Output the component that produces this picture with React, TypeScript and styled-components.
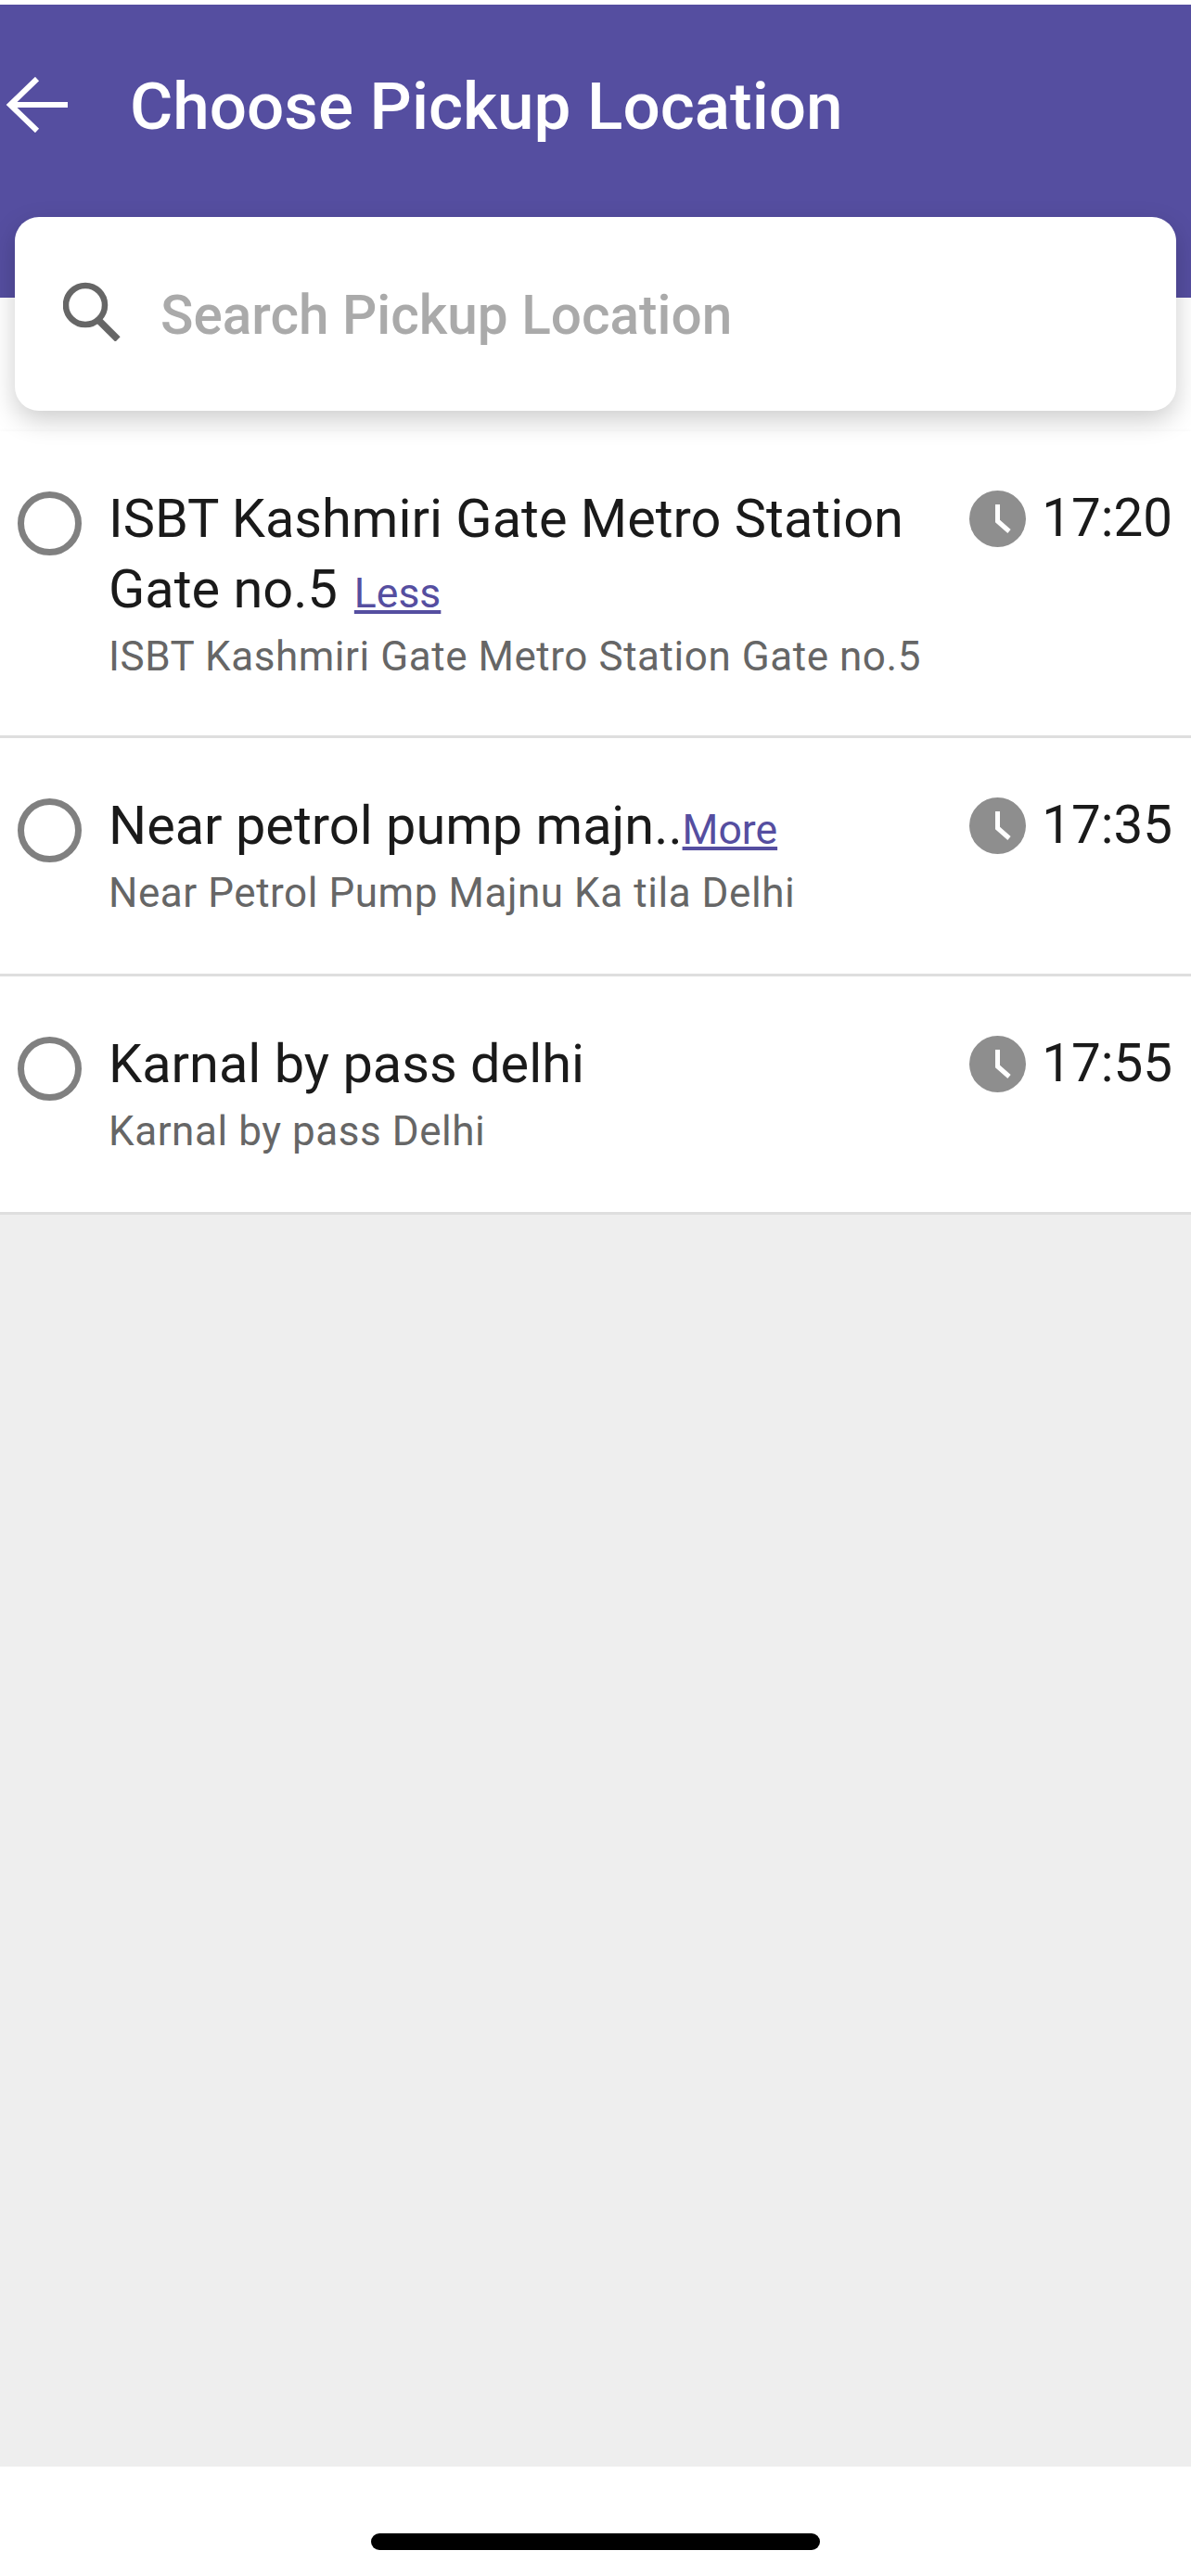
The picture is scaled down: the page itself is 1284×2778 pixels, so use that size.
import React from 'react';
import styled, { createGlobalStyle } from 'styled-components';

const GlobalStyle = createGlobalStyle`
    html, body {
        margin: 0;
        padding: 0;
        background: #fff;
    }
    * {
        box-sizing: border-box;
    }
`;

const Page = styled.div`
    width: 1284px;
    height: 2778px;
    padding-top: 5px;
    display: flex;
    flex-direction: column;
    background: #fff;
    font-family: Roboto, "Liberation Sans", sans-serif;
    overflow: hidden;
`;

const Header = styled.header`
    height: 316px;
    padding: 74px 0 0 6px;
    display: flex;
    align-items: flex-start;
    flex-shrink: 0;
    background: #554ea0;
`;

const BackIcon = styled.svg`
    width: 68px;
    height: 60px;
    margin-top: 4px;
`;

const Title = styled.h1`
    margin: 0 0 0 66px;
    font-size: 71px;
    line-height: 71px;
    font-weight: 500;
    color: #fff;
`;

const SearchCard = styled.div`
    position: relative;
    height: 209px;
    margin: -87px 16px 0;
    padding-left: 52px;
    display: flex;
    align-items: center;
    flex-shrink: 0;
    background: #fff;
    border-radius: 26px;
    box-shadow: 0 10px 28px rgba(0, 0, 0, 0.2);
`;

const SearchIcon = styled.svg`
    width: 63px;
    height: 64px;
    margin-bottom: 6px;
    flex-shrink: 0;
`;

const Placeholder = styled.span`
    margin-left: 42px;
    padding-top: 3px;
    font-size: 58.5px;
    font-weight: 500;
    color: #aaa;
`;

const List = styled.ul`
    margin: 22px 0 0;
    padding: 0;
    list-style: none;
    flex-shrink: 0;
    background: #fff;
    box-shadow: 0 3px 6px rgba(0, 0, 0, 0.14);
`;

const Row = styled.li<{ $expanded?: boolean }>`
    padding: 56px 20px ${p => (p.$expanded ? '50px' : '52px')} 19px;
    display: flex;
    align-items: flex-start;
    border-bottom: 3px solid #dedede;
`;

const Radio = styled.span`
    width: 69px;
    height: 69px;
    margin-top: 9px;
    flex-shrink: 0;
    border: 7px solid #808080;
    border-radius: 50%;
`;

const Content = styled.div`
    flex: 1;
    min-width: 0;
    margin-left: 29px;
`;

const Name = styled.div`
    font-size: 57.7px;
    line-height: 76px;
    color: #1a1a1a;
`;

const Toggle = styled.a<{ $spaced?: boolean }>`
    margin-left: ${p => (p.$spaced ? '18px' : '0')};
    font-size: 44.5px;
    line-height: 1;
    color: #554ea0;
    text-decoration: underline;
`;

const Address = styled.div`
    font-size: 44px;
    line-height: 70px;
    letter-spacing: 0.55px;
    color: #666;
`;

const TimeBox = styled.div`
    height: 76px;
    margin-left: 20px;
    display: flex;
    align-items: center;
    flex-shrink: 0;
`;

const ClockIcon = styled.svg`
    width: 61px;
    height: 61px;
`;

const Time = styled.span`
    margin-left: 17px;
    font-size: 56.5px;
    color: #1a1a1a;
`;

const Empty = styled.div`
    flex: 1;
    background: #eee;
`;

const HomeArea = styled.footer`
    height: 118px;
    padding-top: 72px;
    display: flex;
    justify-content: center;
    flex-shrink: 0;
    background: #fff;
`;

const HomeBar = styled.div`
    width: 484px;
    height: 18px;
    border-radius: 9px;
    background: #000;
`;

const stops = [
    {
        name: 'ISBT Kashmiri Gate Metro Station Gate no.5',
        toggle: 'Less',
        expanded: true,
        address: 'ISBT Kashmiri Gate Metro Station Gate no.5',
        time: '17:20',
    },
    {
        name: 'Near petrol pump majn..',
        toggle: 'More',
        address: 'Near Petrol Pump Majnu Ka tila Delhi',
        time: '17:35',
    },
    {
        name: 'Karnal by pass delhi',
        address: 'Karnal by pass Delhi',
        time: '17:55',
    },
];

const Clock = () => (
    <ClockIcon viewBox="0 0 61 61">
        <circle cx="30.5" cy="30.5" r="30.5" fill="#8e8e8e" />
        <path d="M30.5 15V33L43 44" fill="none" stroke="#fff" strokeWidth="5" />
    </ClockIcon>
);

export default function App() {
    return (
        <Page>
            <GlobalStyle />
            <Header>
                <BackIcon viewBox="0 0 68 60">
                    <path d="M67 30H6M34 2L5 30L34 58" fill="none" stroke="#fff" strokeWidth="6" />
                </BackIcon>
                <Title>Choose Pickup Location</Title>
            </Header>
            <SearchCard>
                <SearchIcon viewBox="0 0 63 64">
                    <circle cx="24" cy="25" r="21" fill="none" stroke="#666" strokeWidth="6.5" />
                    <path d="M39 42L59 62" fill="none" stroke="#666" strokeWidth="7.5" />
                </SearchIcon>
                <Placeholder>Search Pickup Location</Placeholder>
            </SearchCard>
            <List>
                {stops.map(stop => (
                    <Row key={stop.time} $expanded={stop.expanded}>
                        <Radio />
                        <Content>
                            <Name>
                                {stop.name}
                                {stop.toggle && <Toggle $spaced={stop.expanded}>{stop.toggle}</Toggle>}
                            </Name>
                            <Address>{stop.address}</Address>
                        </Content>
                        <TimeBox>
                            <Clock />
                            <Time>{stop.time}</Time>
                        </TimeBox>
                    </Row>
                ))}
            </List>
            <Empty />
            <HomeArea>
                <HomeBar />
            </HomeArea>
        </Page>
    );
}
